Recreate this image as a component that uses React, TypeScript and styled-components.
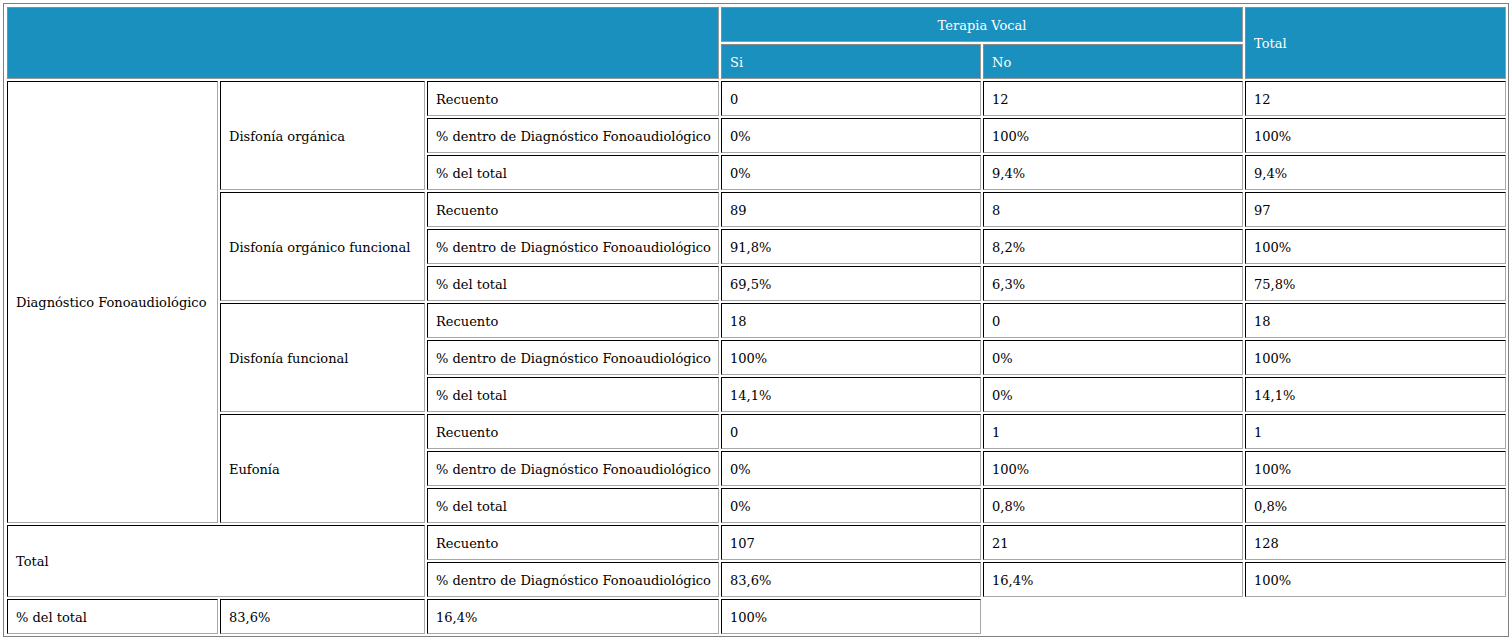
import React from "react";
import styled, { createGlobalStyle } from "styled-components";

// start of styled-components

const GlobalStyle = createGlobalStyle`
  html, body {
    margin: 0;
    padding: 0;
    background: #ffffff;
  }
  body {
    font-family: "DejaVu Serif", "Liberation Serif", serif;
    font-size: 13px;
    color: #000000;
  }
`;

const Page = styled.div`
  padding: 3px 0 0 3px;
`;

const CrossTable = styled.table`
  table-layout: fixed;
  width: 1506px;
  border: 1px solid #808080;
  border-spacing: 2px;
  padding: 1px 0 0 1px;
  font-family: "DejaVu Serif", "Liberation Serif", serif;
  font-size: 13px;
`;

const Row = styled.tr`
  height: 35px;
`;

const HeadCell = styled.th<{ $center?: boolean }>`
  background: #1990bd;
  color: #ffffff;
  font-weight: normal;
  text-align: ${(p) => (p.$center ? "center" : "left")};
  vertical-align: middle;
  padding: 1px 8px 0;
  border: 1px solid #8a8a8a;
  border-right-color: #9a9a9a;
  border-bottom-color: #9a9a9a;
  white-space: nowrap;
`;

const Cell = styled.td`
  background: #ffffff;
  text-align: left;
  vertical-align: middle;
  padding: 1px 8px 0;
  border: 1px solid;
  border-color: #000000 #a8a8a8 #a8a8a8 #000000;
  white-space: nowrap;
  overflow: hidden;
`;

// end of styled-components

const colWidths = [211, 205, 292, 260, 260, 261];

type Stat = { label: string; si: string; no: string; total: string };
type Group = { name: string; stats: Stat[] };

const groups: Group[] = [
  {
    name: "Disfonía orgánica",
    stats: [
      { label: "Recuento", si: "0", no: "12", total: "12" },
      { label: "% dentro de Diagnóstico Fonoaudiológico", si: "0%", no: "100%", total: "100%" },
      { label: "% del total", si: "0%", no: "9,4%", total: "9,4%" },
    ],
  },
  {
    name: "Disfonía orgánico funcional",
    stats: [
      { label: "Recuento", si: "89", no: "8", total: "97" },
      { label: "% dentro de Diagnóstico Fonoaudiológico", si: "91,8%", no: "8,2%", total: "100%" },
      { label: "% del total", si: "69,5%", no: "6,3%", total: "75,8%" },
    ],
  },
  {
    name: "Disfonía funcional",
    stats: [
      { label: "Recuento", si: "18", no: "0", total: "18" },
      { label: "% dentro de Diagnóstico Fonoaudiológico", si: "100%", no: "0%", total: "100%" },
      { label: "% del total", si: "14,1%", no: "0%", total: "14,1%" },
    ],
  },
  {
    name: "Eufonía",
    stats: [
      { label: "Recuento", si: "0", no: "1", total: "1" },
      { label: "% dentro de Diagnóstico Fonoaudiológico", si: "0%", no: "100%", total: "100%" },
      { label: "% del total", si: "0%", no: "0,8%", total: "0,8%" },
    ],
  },
];

const totals: Stat[] = [
  { label: "Recuento", si: "107", no: "21", total: "128" },
  { label: "% dentro de Diagnóstico Fonoaudiológico", si: "83,6%", no: "16,4%", total: "100%" },
];

function App() {
  const groupRows = groups.length * 3;
  return (
    <Page>
      <GlobalStyle />
      <CrossTable>
        <colgroup>
          {colWidths.map((w, i) => (
            <col key={i} style={{ width: w }} />
          ))}
        </colgroup>
        <thead>
          <Row>
            <HeadCell colSpan={3} rowSpan={2} />
            <HeadCell colSpan={2} $center>
              Terapia Vocal
            </HeadCell>
            <HeadCell rowSpan={2}>Total</HeadCell>
          </Row>
          <Row>
            <HeadCell>Si</HeadCell>
            <HeadCell>No</HeadCell>
          </Row>
        </thead>
        <tbody>
          {groups.map((g, gi) =>
            g.stats.map((s, si) => (
              <Row key={`${gi}-${si}`}>
                {gi === 0 && si === 0 && (
                  <Cell rowSpan={groupRows}>Diagnóstico Fonoaudiológico</Cell>
                )}
                {si === 0 && <Cell rowSpan={3}>{g.name}</Cell>}
                <Cell>{s.label}</Cell>
                <Cell>{s.si}</Cell>
                <Cell>{s.no}</Cell>
                <Cell>{s.total}</Cell>
              </Row>
            ))
          )}
          {totals.map((s, i) => (
            <Row key={`t-${i}`}>
              {i === 0 && (
                <Cell colSpan={2} rowSpan={2}>
                  Total
                </Cell>
              )}
              <Cell>{s.label}</Cell>
              <Cell>{s.si}</Cell>
              <Cell>{s.no}</Cell>
              <Cell>{s.total}</Cell>
            </Row>
          ))}
          <Row>
            <Cell>% del total</Cell>
            <Cell>83,6%</Cell>
            <Cell>16,4%</Cell>
            <Cell>100%</Cell>
          </Row>
        </tbody>
      </CrossTable>
    </Page>
  );
}

export default App;
